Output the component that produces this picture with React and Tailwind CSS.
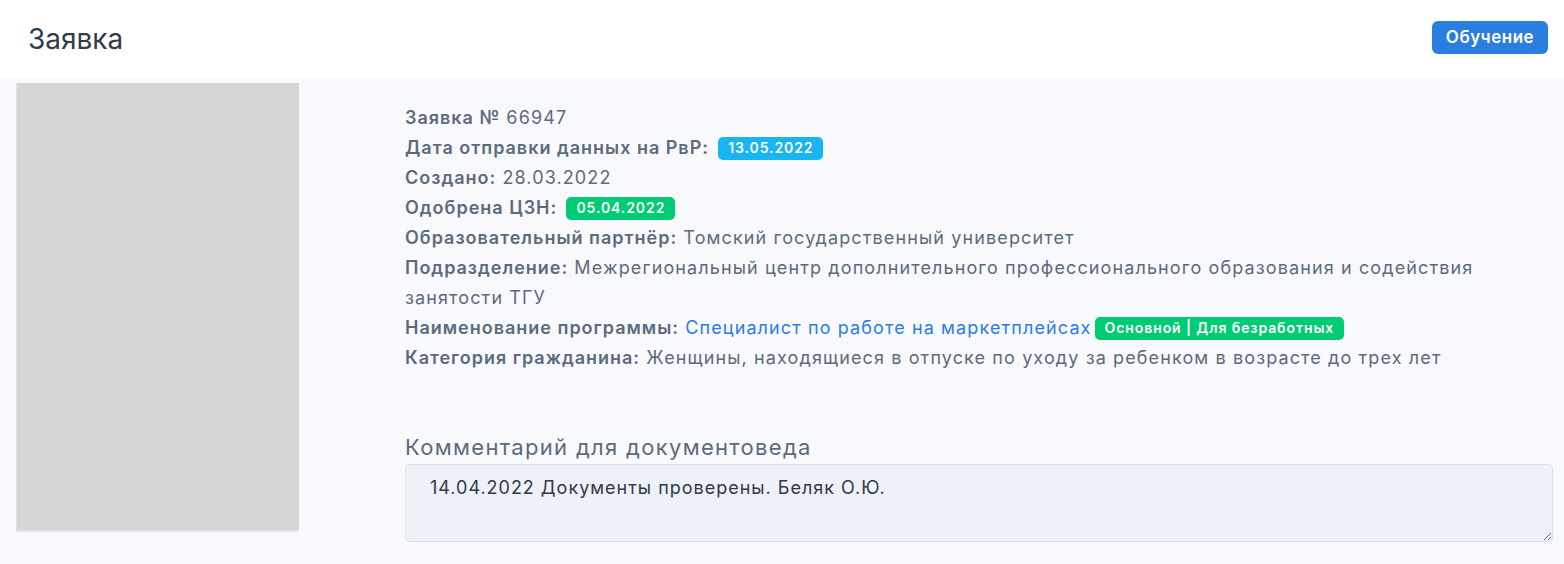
import React from "react";

const font = { fontFamily: "Inter, 'Noto Sans', sans-serif" };

function Badge({ children, color }) {
  return (
    <span
      className={`ml-[3px] inline-flex h-[23px] items-center rounded-[5px] px-[10px] align-[1px] text-[14px] font-semibold leading-none tracking-[0.065em] text-white ${color}`}
    >
      {children}
    </span>
  );
}

function Row({ label, children }) {
  return (
    <div className="leading-[30px]">
      <span className="font-semibold tracking-[0.055em]">{label}</span> {children}
    </div>
  );
}

export default function App() {
  return (
    <div className="min-h-[564px] bg-[#f8f9fc]" style={font}>
      <header className="flex h-[78px] items-center justify-between bg-white pl-[28px] pr-[16px]">
        <h1 className="text-[28px] font-normal text-[#2f3b4b]">Заявка</h1>
        <button className="mb-[3px] h-[33px] w-[116px] rounded-[6px] bg-[#2a7de1] text-[17px] font-semibold tracking-[0.03em] text-white">
          Обучение
        </button>
      </header>

      <div className="flex pl-[16px] pr-[11px] pt-[5px]">
        <div className="h-[449px] w-[283px] shrink-0 border-b-2 border-l border-[#e3e3e5] bg-[#d6d6d6]" />

        <div className="ml-[106px] flex-1 pt-[20px] text-[18px] tracking-[0.062em] text-[#5b6b7e]">
          <Row label="Заявка №">66947</Row>
          <Row label="Дата отправки данных на РвР:">
            <Badge color="bg-[#17b6f2]">13.05.2022</Badge>
          </Row>
          <Row label="Создано:">28.03.2022</Row>
          <Row label="Одобрена ЦЗН:">
            <Badge color="bg-[#00cc74]">05.04.2022</Badge>
          </Row>
          <Row label="Образовательный партнёр:">Томский государственный университет</Row>
          <Row label="Подразделение:">
            Межрегиональный центр дополнительного профессионального образования и содействия занятости ТГУ
          </Row>
          <Row label="Наименование программы:">
            <span className="text-[#2b7de9]">Специалист по работе на маркетплейсах</span>
            <Badge color="bg-[#00cc74]">Основной | Для безработных</Badge>
          </Row>
          <Row label="Категория гражданина:">
            Женщины, находящиеся в отпуске по уходу за ребенком в возрасте до трех лет
          </Row>

          <div className="mt-[59px] text-[22px] leading-[30px] tracking-[0.06em] text-[#5b6b7e]">
            Комментарий для документоведа
          </div>
          <textarea
            readOnly
            defaultValue="14.04.2022 Документы проверены. Беляк О.Ю."
            className="mt-[2px] block h-[78px] w-full rounded-[5px] border border-[#dce1ea] bg-[#edf1f8] px-[24px] py-[8px] text-[18px] leading-[30px] tracking-[0.055em] text-[#333a44] outline-none"
            style={font}
          />
        </div>
      </div>
    </div>
  );
}
